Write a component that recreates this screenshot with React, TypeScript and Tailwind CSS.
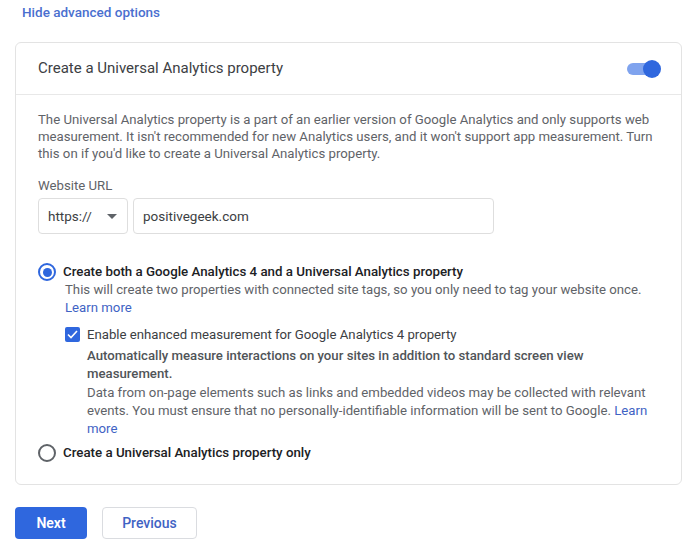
import React from 'react';

const App: React.FC = () => {
  return (
    <div className="w-[700px] h-[545px] bg-white overflow-hidden font-['Roboto',sans-serif]">
      <div className="px-[22px] h-[42px]">
        <a href="#" className="text-[13.5px] font-medium text-[#4a6fcf] leading-[19px]">
          Hide advanced options
        </a>
      </div>

      <div className="mx-[15px] w-[667px] h-[443px] border border-[#e3e3e3] rounded-[6px]">
        {/* header */}
        <div className="flex items-center justify-between h-[52px] px-[22px] border-b border-[#e8e8e8]">
          <span className="text-[15px] text-[#3c4043]">Create a Universal Analytics property</span>
          <div className="relative w-[26px] h-[12px] mr-[6px] rounded-full bg-[#7fa3ee]">
            <div className="absolute right-[-8px] top-[-3px] w-[18px] h-[18px] rounded-full bg-[#2f67de]" />
          </div>
        </div>

        {/* body */}
        <div className="px-[22px] pt-[16px] text-[13.2px] leading-[18px] text-[#5f6368] whitespace-nowrap">
          <p className="leading-[17px]">
            The Universal Analytics property is a part of an earlier version of Google Analytics and only supports web
            <br />
            measurement. It isn't recommended for new Analytics users, and it won't support app measurement. Turn
            <br />
            this on if you'd like to create a Universal Analytics property.
          </p>

          <div className="mt-[15px]">Website URL</div>
          <div className="flex gap-[5px] mt-[3px] text-[13.5px]">
            <div className="flex items-center justify-between w-[90px] h-[36px] pl-[9px] pr-[10px] border border-[#dedede] rounded-[4px] text-[#3c4043]">
              <span>https://</span>
              <svg width="10" height="5" viewBox="0 0 10 5">
                <path d="M0 0 L10 0 L5 5 Z" fill="#5f6368" />
              </svg>
            </div>
            <div className="flex items-center w-[361px] h-[36px] px-[9px] border border-[#dedede] rounded-[4px] text-[#3c4043]">
              positivegeek.com
            </div>
          </div>

          {/* option 1 */}
          <div className="flex mt-[29px]">
            <div className="w-[18px] h-[18px] rounded-full border-2 border-[#2f67de] flex items-center justify-center shrink-0">
              <div className="w-[9px] h-[9px] rounded-full bg-[#2f67de]" />
            </div>
            <div className="ml-[7px]">
              <div className="font-medium text-[#202124] text-[13.3px]">
                Create both a Google Analytics 4 and a Universal Analytics property
              </div>
              <div className="pl-[2px]">
                This will create two properties with connected site tags, so you only need to tag your website once.
              </div>
              <div className="pl-[2px]">
                <a href="#" className="text-[#3f63c4]">Learn more</a>
              </div>

              <div className="flex mt-[9px] pl-[2px]">
                <div className="w-[15px] h-[15px] mt-[1px] rounded-[2px] bg-[#2f67de] flex items-center justify-center shrink-0">
                  <svg width="11" height="9" viewBox="0 0 11 9">
                    <path d="M1 4.5 L4 7.5 L10 1" stroke="white" strokeWidth="1.6" fill="none" />
                  </svg>
                </div>
                <div className="ml-[7px]">
                  <div className="text-[#3c4043]">Enable enhanced measurement for Google Analytics 4 property</div>
                  <div className="mt-[3px] font-medium text-[#505458]">
                    Automatically measure interactions on your sites in addition to standard screen view
                    <br />
                    measurement.
                  </div>
                  <div className="mt-[1px]">
                    Data from on-page elements such as links and embedded videos may be collected with relevant
                    <br />
                    events. You must ensure that no personally-identifiable information will be sent to Google.{' '}
                    <a href="#" className="text-[#3f63c4]">Learn</a>
                    <br />
                    <a href="#" className="text-[#3f63c4]">more</a>
                  </div>
                </div>
              </div>
            </div>
          </div>

          {/* option 2 */}
          <div className="flex items-center mt-[6px]">
            <div className="w-[18px] h-[18px] rounded-full border-2 border-[#5f6368] shrink-0" />
            <span className="ml-[7px] font-medium text-[#202124] text-[13.3px]">Create a Universal Analytics property only</span>
          </div>
        </div>
      </div>

      <div className="flex gap-[15px] px-[15px] mt-[22px]">
        <button className="w-[72px] h-[32px] rounded-[4px] bg-[#2f67de] text-white text-[14px] font-semibold">
          Next
        </button>
        <button className="w-[95px] h-[32px] rounded-[4px] border border-[#dadce0] bg-white text-[#3f63c4] text-[14px] font-medium">
          Previous
        </button>
      </div>
    </div>
  );
};

export default App;
